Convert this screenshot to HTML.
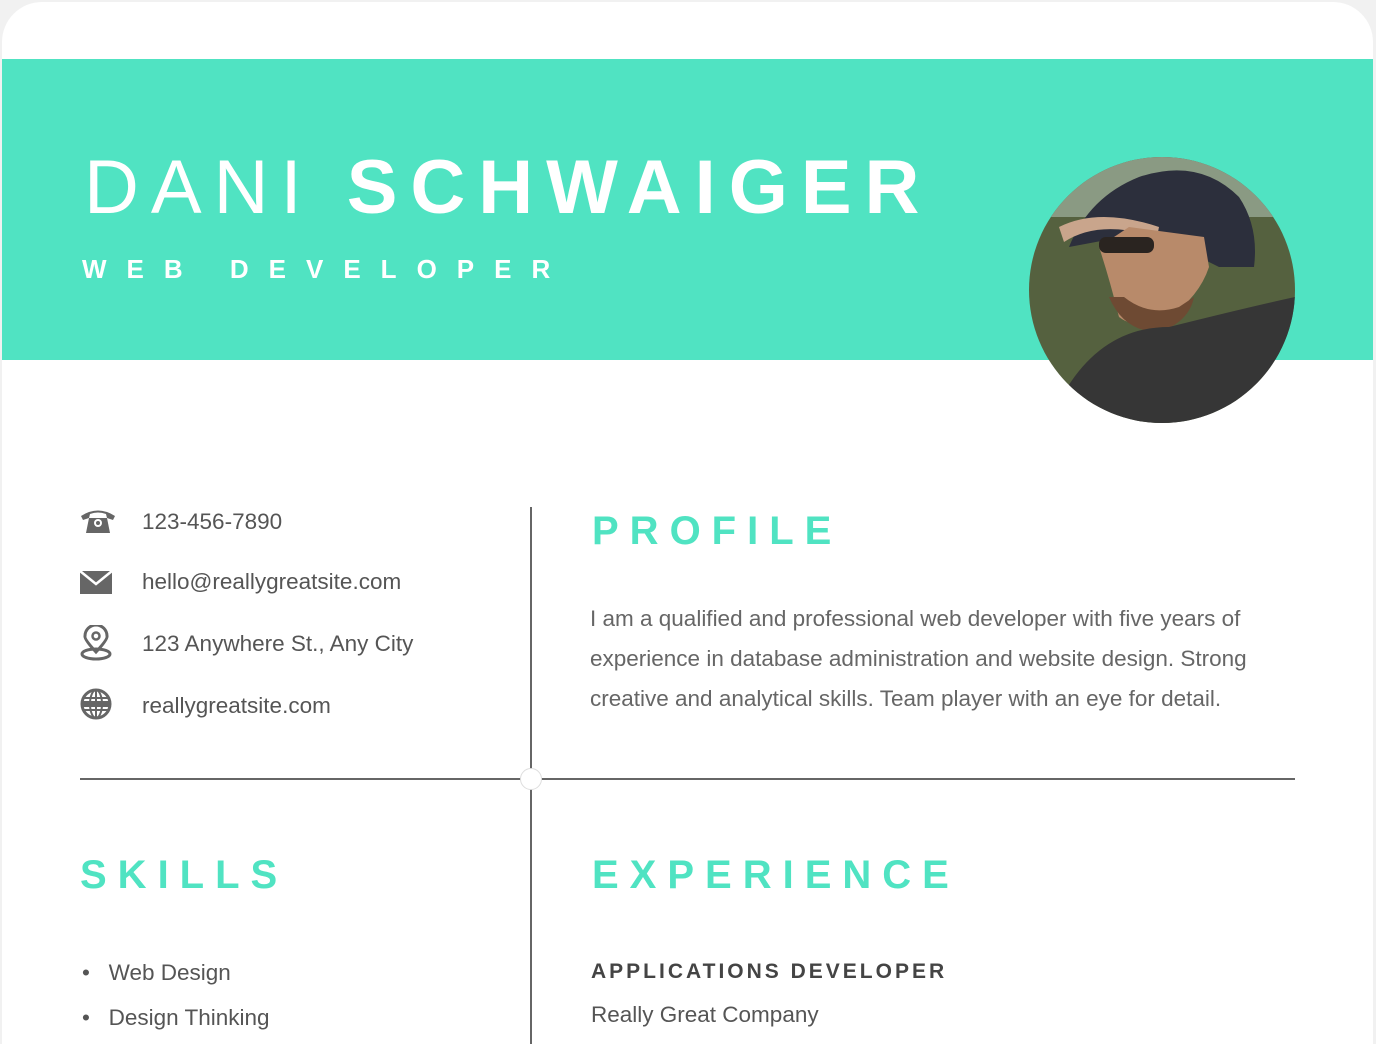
<!DOCTYPE html>
<html><head><meta charset="utf-8"><style>
*{margin:0;padding:0;box-sizing:border-box}
html,body{width:1376px;height:1044px;overflow:hidden}
body{background:#f1f1f1;font-family:"Liberation Sans",sans-serif;position:relative}
.card{position:absolute;left:2px;top:2px;width:1371px;height:1042px;background:#fff;border-radius:40px 40px 0 0;overflow:hidden}
.band{position:absolute;left:0;top:57px;width:100%;height:301px;background:#50e3c2}
.abs{position:absolute}
.name{left:82px;top:142px;font-size:76px;color:#fff;letter-spacing:12px;white-space:nowrap}
.name b{font-weight:bold;letter-spacing:13px}
.role{left:80px;top:252px;font-size:26px;color:#fff;font-weight:bold;letter-spacing:20px;white-space:nowrap}
.photo{left:1027px;top:155px;width:266px;height:266px;border-radius:50%;overflow:hidden}
.ct{font-size:22.5px;color:#555;white-space:nowrap}
.h{color:#50e3c2;font-weight:bold;font-size:40px;letter-spacing:11px;white-space:nowrap}
.p{font-size:22.5px;color:#666;line-height:40px}
.vl{left:528px;top:505px;width:2px;height:540px;background:#666}
.hl{top:776px;height:2px;background:#666}
</style></head><body>
<div class="card">
<div class="band"></div>
<div class="abs name">DANI <b>SCHWAIGER</b></div>
<div class="abs role">WEB DEVELOPER</div>
<div class="abs photo">
<svg width="266" height="266" viewBox="0 0 266 266">
<rect width="266" height="266" fill="#55613f"/>
<rect x="0" y="0" width="266" height="60" fill="#8a9a83"/>
<path d="M40 90 Q60 40 110 20 Q170 0 210 40 Q230 70 225 110 L190 110 L120 75 Z" fill="#2c2f3c"/>
<path d="M30 70 Q70 50 130 70 L128 80 Q70 62 35 85 Z" fill="#c9a58c"/>
<path d="M70 90 Q80 120 90 160 Q110 175 140 160 Q170 140 180 110 L175 80 L100 70 Z" fill="#b88a6a"/>
<path d="M80 140 Q95 175 130 175 Q160 165 165 140 L150 150 Q120 160 95 140 Z" fill="#6e4a33"/>
<rect x="70" y="80" width="55" height="16" rx="7" fill="#2a2420"/>
<path d="M20 266 Q60 170 140 170 Q220 150 266 140 L266 266 Z" fill="#363636"/>
</svg></div>

<svg class="abs" style="left:78px;top:505px" width="36" height="28" viewBox="0 0 36 28"><path d="M1 9 Q18 -2 35 9 L33 13 L27 11 L26 7 Q18 4 10 7 L9 11 L3 13 Z" fill="#666"/><path d="M9 11 L27 11 L30 26 L6 26 Z" fill="#666"/><circle cx="18" cy="16" r="4" fill="#fff"/><circle cx="18" cy="16" r="2" fill="#666"/></svg>
<div class="abs ct" style="left:140px;top:507px">123-456-7890</div>
<svg class="abs" style="left:78px;top:568px" width="34" height="24" viewBox="0 0 34 24"><rect width="32" height="23" y="1" fill="#666"/><path d="M0 1 L16 14 L32 1" stroke="#fff" stroke-width="2.5" fill="none"/></svg>
<div class="abs ct" style="left:140px;top:567px">hello@reallygreatsite.com</div>
<svg class="abs" style="left:78px;top:623px" width="34" height="36" viewBox="0 0 34 36"><path d="M16 27 Q4 14 5 11 A11 11 0 0 1 27 11 Q28 14 16 27 Z" stroke="#666" stroke-width="3" fill="none"/><circle cx="16" cy="11" r="3.5" stroke="#666" stroke-width="2.5" fill="none"/><ellipse cx="16" cy="29" rx="14" ry="5" stroke="#666" stroke-width="3" fill="none"/></svg>
<div class="abs ct" style="left:140px;top:629px">123 Anywhere St., Any City</div>
<svg class="abs" style="left:78px;top:686px" width="34" height="34" viewBox="0 0 34 34"><circle cx="16" cy="16" r="14" stroke="#666" stroke-width="3" fill="none"/><ellipse cx="16" cy="16" rx="6" ry="14" stroke="#666" stroke-width="2" fill="none"/><path d="M3 10 H29 M3 22 H29 M16 2 V30" stroke="#666" stroke-width="2"/><rect x="3" y="13" width="26" height="6" fill="#666"/></svg>
<div class="abs ct" style="left:140px;top:691px">reallygreatsite.com</div>

<div class="abs vl"></div>
<div class="abs hl" style="left:78px;width:1215px"></div>
<div class="abs" style="left:518px;top:766px;width:22px;height:22px;border-radius:50%;background:#fff;border:1px solid #ddd"></div>

<div class="abs h" style="left:590px;top:507px">PROFILE</div>
<div class="abs p" style="left:588px;top:597px;width:690px">I am a qualified and professional web developer with five years of experience in database administration and website design. Strong creative and analytical skills. Team player with an eye for detail.</div>

<div class="abs h" style="left:78px;top:851px">SKILLS</div>
<div class="abs ct" style="left:80px;top:958px;color:#555">•&nbsp;&nbsp;&nbsp;Web Design</div>
<div class="abs ct" style="left:80px;top:1003px;color:#555">•&nbsp;&nbsp;&nbsp;Design Thinking</div>

<div class="abs h" style="left:590px;top:851px">EXPERIENCE</div>
<div class="abs" style="left:589px;top:958px;font-size:21px;font-weight:bold;color:#444;letter-spacing:3px;white-space:nowrap">APPLICATIONS DEVELOPER</div>
<div class="abs ct" style="left:589px;top:1000px">Really Great Company</div>
</div>
</body></html>
